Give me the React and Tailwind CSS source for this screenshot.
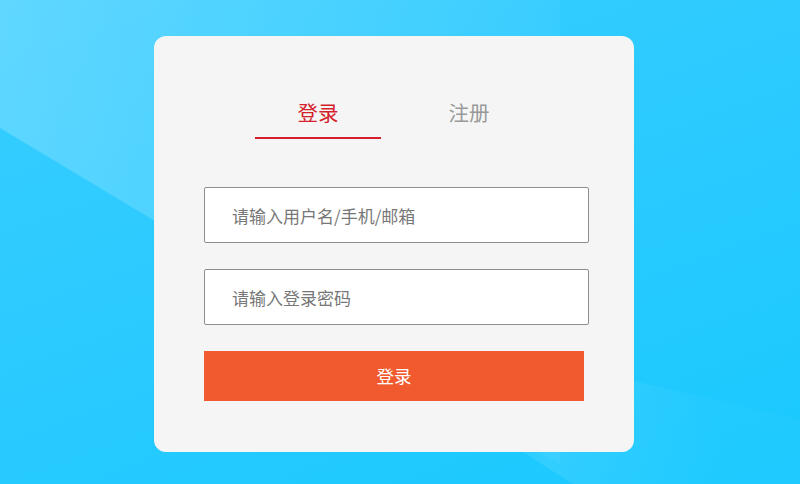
import React from "react";

export default function App() {
  return (
    <div
      className="relative h-[484px] w-[800px] overflow-hidden bg-[linear-gradient(160deg,#38cdff_0%,#2acaff_50%,#19c9ff_100%)]"
      style={{ fontFamily: '"Noto Sans CJK SC", "Noto Sans", sans-serif' }}
    >
      <div className="pointer-events-none absolute inset-0 bg-[linear-gradient(90deg,rgba(255,255,255,0.2)_0%,rgba(255,255,255,0.12)_35%,rgba(255,255,255,0)_90%)] [clip-path:polygon(0_0,560px_0,560px_464px,0_128px)]" />
      <div className="pointer-events-none absolute inset-0 bg-[linear-gradient(90deg,rgba(255,255,255,0)_60%,rgba(255,255,255,0.09)_68%,rgba(255,255,255,0.02)_90%)] [clip-path:polygon(400px_373px,523px_452px,573px_484px,800px_484px,800px_420px,600px_373px)]" />

      <div className="relative ml-[154px] pt-[36px]">
        <div className="flex w-[480px] flex-col rounded-[12px] bg-[#f5f5f5] pb-[51px] pl-[50px] pt-[62px]">
          <div className="ml-[51px] flex gap-[25px]">
            <div className="flex w-[126px] flex-col items-center">
              <span className="text-[20.5px] leading-7 text-[#d61f2d]">登录</span>
              <div className="mt-[11px] h-[2px] w-full bg-[#d61f2d]" />
            </div>
            <div className="flex w-[126px] flex-col items-center">
              <span className="text-[20.5px] leading-7 text-[#999999]">注册</span>
            </div>
          </div>

          <input
            type="text"
            placeholder="请输入用户名/手机/邮箱"
            className="mt-[48px] h-[56px] w-[385px] rounded-[2px] border border-[#8e8e8e] bg-white pl-[27px] text-[17px] text-[#333] outline-none placeholder:text-[#777777]"
          />
          <input
            type="password"
            placeholder="请输入登录密码"
            className="mt-[26px] h-[56px] w-[385px] rounded-[2px] border border-[#8e8e8e] bg-white pl-[27px] text-[17px] text-[#333] outline-none placeholder:text-[#777777]"
          />
          <button
            type="button"
            className="mt-[26px] h-[50px] w-[380px] bg-[#f15a2f] text-[17.5px] text-white"
          >
            登录
          </button>
        </div>
      </div>
    </div>
  );
}
